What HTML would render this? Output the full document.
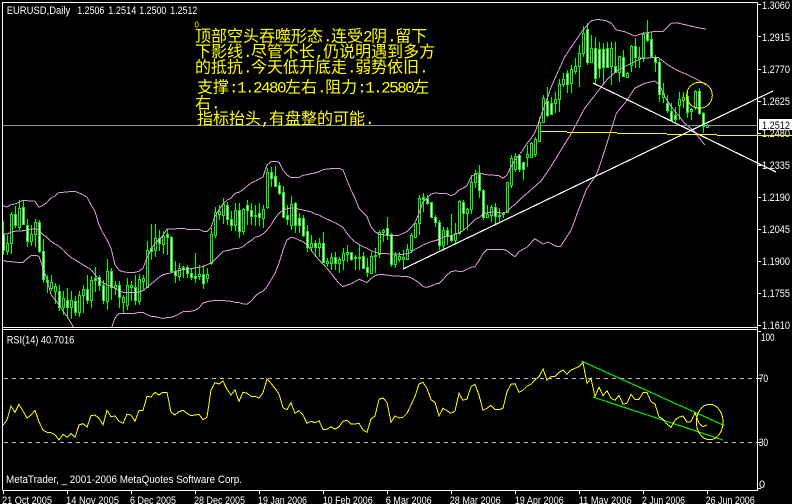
<!DOCTYPE html>
<html><head><meta charset="utf-8"><title>EURUSD,Daily</title>
<style>
html,body{margin:0;padding:0;background:#000;width:792px;height:504px;overflow:hidden}
svg{display:block}
.l{font:11px "Liberation Sans",sans-serif;fill:#fff}
.c{font:16px "WenQuanYi Zen Hei","Noto Sans CJK SC",sans-serif;fill:#ff0}
.m{font:16px "Liberation Mono",monospace;letter-spacing:-1.6px}
</style></head><body>
<svg id="s" xmlns="http://www.w3.org/2000/svg" width="792" height="504" viewBox="0 0 792 504">
<defs><clipPath id="mc"><rect x="3" y="3" width="754" height="324"/></clipPath></defs>
<g id="candles" shape-rendering="crispEdges"></g>
<g id="bands" clip-path="url(#mc)" fill="none" stroke="#dda0dd" shape-rendering="crispEdges"></g>
<path d="M3 125.5H757" stroke="#8a95a0" shape-rendering="crispEdges"/>
<path d="M2.5 490V2.5H757.5V490.5H2.5M2 327.5H757M2 329.5H757" fill="none" stroke="#fff" shape-rendering="crispEdges"/>
<path stroke="#fff" shape-rendering="crispEdges" d="M758 4.5h3M758 36.5h3M758 69.5h3M758 101.5h3M758 133.5h3M758 165.5h3M758 197.5h3M758 229.5h3M758 261.5h3M758 293.5h3M758 325.5h3M758 331.5h3M758 378.5h3M758 442.5h3M758 488.5h3M3.5 491v3M67.5 491v3M131.5 491v3M195.5 491v3M259.5 491v3M323.5 491v3M387.5 491v3M451.5 491v3M515.5 491v3M579.5 491v3M643.5 491v3M707.5 491v3"/>
<g class="l">
<text x="6.7" y="14" class="l" textLength="63.5" lengthAdjust="spacingAndGlyphs">EURUSD,Daily</text>
<text x="77.3" y="14" class="l" textLength="27" lengthAdjust="spacingAndGlyphs">1.2506</text>
<text x="108.3" y="14" class="l" textLength="28" lengthAdjust="spacingAndGlyphs">1.2514</text>
<text x="139.3" y="14" class="l" textLength="27" lengthAdjust="spacingAndGlyphs">1.2500</text>
<text x="170.3" y="14" class="l" textLength="27" lengthAdjust="spacingAndGlyphs">1.2512</text>
<text x="762" y="9" class="l" textLength="28" lengthAdjust="spacingAndGlyphs">1.3060</text>
<text x="762" y="41" class="l" textLength="28" lengthAdjust="spacingAndGlyphs">1.2915</text>
<text x="762" y="73" class="l" textLength="28" lengthAdjust="spacingAndGlyphs">1.2770</text>
<text x="762" y="105" class="l" textLength="28" lengthAdjust="spacingAndGlyphs">1.2625</text>
<text x="762" y="137" class="l" textLength="28" lengthAdjust="spacingAndGlyphs">1.2480</text>
<text x="762" y="169" class="l" textLength="28" lengthAdjust="spacingAndGlyphs">1.2335</text>
<text x="762" y="201" class="l" textLength="28" lengthAdjust="spacingAndGlyphs">1.2190</text>
<text x="762" y="233" class="l" textLength="28" lengthAdjust="spacingAndGlyphs">1.2045</text>
<text x="762" y="265" class="l" textLength="28" lengthAdjust="spacingAndGlyphs">1.1900</text>
<text x="762" y="297" class="l" textLength="28" lengthAdjust="spacingAndGlyphs">1.1755</text>
<text x="762" y="329" class="l" textLength="28" lengthAdjust="spacingAndGlyphs">1.1610</text>
<text x="761" y="341" class="l" textLength="13.5" lengthAdjust="spacingAndGlyphs">100</text>
<text x="758.7" y="382" class="l" textLength="9.5" lengthAdjust="spacingAndGlyphs">70</text>
<text x="758.7" y="446" class="l" textLength="9.5" lengthAdjust="spacingAndGlyphs">30</text>
<text x="759" y="488" class="l">0</text>
<text x="6.7" y="343.7" class="l" textLength="67.5" lengthAdjust="spacingAndGlyphs">RSI(14) 40.7016</text>
<text x="6" y="483" class="l" textLength="236" lengthAdjust="spacingAndGlyphs">MetaTrader, _ 2001-2006 MetaQuotes Software Corp.</text>
<text x="2" y="504" class="l" textLength="50" lengthAdjust="spacingAndGlyphs">21 Oct 2005</text>
<text x="66" y="504" class="l" textLength="53" lengthAdjust="spacingAndGlyphs">14 Nov 2005</text>
<text x="130" y="504" class="l" textLength="46" lengthAdjust="spacingAndGlyphs">6 Dec 2005</text>
<text x="194" y="504" class="l" textLength="51" lengthAdjust="spacingAndGlyphs">28 Dec 2005</text>
<text x="258" y="504" class="l" textLength="49" lengthAdjust="spacingAndGlyphs">19 Jan 2006</text>
<text x="322.7" y="504" class="l" textLength="50" lengthAdjust="spacingAndGlyphs">10 Feb 2006</text>
<text x="385.7" y="504" class="l" textLength="46" lengthAdjust="spacingAndGlyphs">6 Mar 2006</text>
<text x="449.7" y="504" class="l" textLength="51" lengthAdjust="spacingAndGlyphs">28 Mar 2006</text>
<text x="514.7" y="504" class="l" textLength="49" lengthAdjust="spacingAndGlyphs">19 Apr 2006</text>
<text x="578.7" y="504" class="l" textLength="53" lengthAdjust="spacingAndGlyphs">11 May 2006</text>
<text x="642" y="504" class="l" textLength="43" lengthAdjust="spacingAndGlyphs">2 Jun 2006</text>
<text x="705.7" y="504" class="l" textLength="49" lengthAdjust="spacingAndGlyphs">26 Jun 2006</text>
</g>
<rect x="759" y="119" width="33" height="11" fill="#fff"/>
<text x="762" y="129" class="l" style="fill:#000" textLength="28" lengthAdjust="spacingAndGlyphs">1.2512</text>
<g shape-rendering="crispEdges" fill="none">
<path d="M541 131.5H567M567 132.5H617M617 133.5H667M667 134.5H717M717 135.5H792" stroke="#ff0"/>
<path d="M403 269L773 91M593 83L776 172" stroke="#fff" stroke-width="1.2"/>
<ellipse cx="699.5" cy="95.3" rx="12.8" ry="13" stroke="#ff0"/>
<path d="M581.3 361L724.7 425.7M593 397L723 440" stroke="#00e800" stroke-width="1.2"/>
<path d="M4 378.5H757M4 442.5H757" stroke="#c0c0c0" stroke-dasharray="4 4"/>
<polyline id="rsi" stroke="#ff0"/>
<ellipse cx="709.7" cy="422" rx="13.3" ry="17.7" stroke="#ff0"/>
</g>
<text x="194.5" y="27.5" style="font:8px 'Liberation Sans',sans-serif;fill:#ff0">0</text>
<text class="c" x="195" y="41.5">顶部空头吞噬形态<tspan class="m">.</tspan>连受<tspan class="m">2</tspan>阴<tspan class="m">.</tspan>留下</text>
<text class="c" x="195" y="57">下影线<tspan class="m">.</tspan>尽管不长<tspan class="m">,</tspan>仍说明遇到多方</text>
<text class="c" x="195" y="72.5">的抵抗<tspan class="m">.</tspan>今天低开底走<tspan class="m">.</tspan>弱势依旧<tspan class="m">.</tspan></text>
<text class="c" x="197" y="92.5">支撑<tspan class="m">:1.2480</tspan>左右<tspan class="m">.</tspan>阻力<tspan class="m">:1.2580</tspan>左</text>
<text class="c" x="195" y="108.5">右<tspan class="m">.</tspan></text>
<text class="c" x="197" y="124">指标抬头<tspan class="m">,</tspan>有盘整的可能<tspan class="m">.</tspan></text>
</svg>
<script>
var NS="http://www.w3.org/2000/svg";
function el(p,t,a){var e=document.createElementNS(NS,t);for(var k in a)e.setAttribute(k,a[k]);p.appendChild(e);return e}
var c2=[[160,198,245,262,1],[200,225,248,262,0],[132,138,225,258,0],[115,138,172,180,1],[97,120,178,185,0],[97,118,168,172,1],[152,172,218,236,1],[172,197,218,235,0],[152,163,198,236,0],[155,163,250,255,1],[213,250,332,345,1],[320,337,343,375,1],[320,343,360,368,0],[345,355,370,408,0],[352,370,418,430,1],[370,390,418,440,0],[360,397,418,450,1],[370,397,418,452,0],[385,400,432,445,1],[370,380,432,448,0],[350,364,380,436,0],[320,364,396,408,1],[325,337,396,420,0],[297,330,336,372,1],[320,328,352,370,1],[335,352,396,408,1],[273,310,400,425,0],[300,310,358,395,1],[340,351,360,380,0],[340,352,387,420,1],[380,388,402,436,0],[330,352,410,425,0],[340,352,358,400,0],[320,358,396,410,1],[318,334,398,410,0],[322,331,338,365,0],[220,245,358,360,0],[168,240,248,275,1],[168,210,245,268,0],[185,210,225,250,1],[188,205,228,258,0],[182,197,207,260,1],[205,207,308,312,1],[280,308,322,345,1],[285,301,324,340,0],[295,297,303,330,1],[290,298,316,330,1],[300,316,328,335,1],[255,325,330,345,1],[290,318,323,335,0],[290,318,345,362,1],[300,319,330,345,0],[180,198,285,290,0],[118,132,200,210,0],[110,130,138,155,0],[90,108,140,168,0],[102,110,152,170,1],[130,153,170,188,1],[105,127,170,190,0],[105,127,188,210,1],[120,123,190,200,0],[95,112,127,170,1],[105,127,143,170,1],[110,140,143,175,1],[105,135,148,175,1],[112,122,150,180,0]];
var c3=[[115,125,232,238,0],[110,125,143,170,1],[108,138,167,170,1],[155,166,190,195,1],[168,187,260,265,1],[225,255,268,285,1],[198,222,285,300,0],[215,220,285,310,1],[250,265,285,310,1],[255,265,315,320,1],[285,302,350,365,1],[315,340,352,365,0],[330,340,352,380,1],[325,340,352,380,0],[307,340,395,400,1],[385,392,400,412,0],[370,382,400,420,0],[365,382,400,420,1],[380,388,398,428,0],[355,370,390,420,0],[345,365,372,395,0],[365,367,386,392,1],[375,382,385,420,1],[345,382,385,420,1],[365,378,415,418,1],[385,412,425,442,1],[365,378,428,430,0],[355,375,378,430,1],[300,305,372,385,0],[298,300,306,335,0],[262,295,315,330,1],[310,313,402,412,1],[365,375,402,415,0],[365,378,387,395,0],[360,382,388,418,0],[342,358,386,390,0],[310,316,360,370,0],[280,280,320,325,0],[195,205,280,315,0],[190,200,207,245,1],[195,205,218,225,1],[215,217,262,265,1],[255,262,275,290,1],[270,275,345,360,1],[290,300,345,358,0],[290,300,318,345,1],[252,315,330,335,1],[280,310,330,340,0],[210,213,310,315,0],[210,217,250,300,1],[235,238,248,300,0],[135,155,238,252,0],[120,130,155,175,0],[105,132,180,205,1],[178,180,262,270,1],[225,252,262,265,0],[225,232,255,275,0],[220,232,258,285,1],[235,256,258,275,0],[245,250,253,265,1],[155,157,245,250,0],[75,85,165,175,0],[70,77,117,125,0],[72,75,118,125,1],[95,97,117,150,1],[45,72,80,110,0]];
var c4=[[425,430,470,475,0],[410,418,462,470,0],[350,365,422,425,0],[285,293,365,368,0],[260,303,345,350,1],[290,310,342,345,1],[275,297,310,340,0],[238,252,297,335,0],[220,236,252,262,0],[210,220,252,280,1],[195,208,248,280,0],[175,197,212,222,0],[135,160,197,262,0],[78,100,160,170,0],[70,87,187,195,1],[105,145,185,190,0],[110,145,235,250,1],[125,147,205,235,1],[130,147,200,255,1],[125,145,200,205,1],[125,145,197,255,0],[125,197,215,218,1],[168,167,215,245,0],[150,170,227,230,1],[215,220,230,235,0],[135,138,195,217,0],[115,137,172,205,1],[140,170,177,205,0],[95,103,175,185,0],[60,100,120,125,1],[95,118,168,172,1],[165,170,185,215,1],[178,185,283,305,1],[250,280,290,310,0],[285,310,330,338,1],[310,333,360,362,1],[320,345,358,365,1],[275,298,315,360,0],[275,290,300,325,0],[270,287,335,355,1],[325,327,332,360,0],[270,273,322,330,0],[265,273,340,345,1],[335,338,378,400,1],[373,376,380,383,0]];
var g="",w="",b="",i=0;
function add(arr,yo){arr.forEach(function(d){var x=3+4*i,h=Math.round(yo+d[0]/3),t=Math.round(yo+d[1]/3),e=Math.round(yo+d[2]/3),l=Math.round(yo+d[3]/3),X=x+.5;
g+="M"+X+" "+h+"V"+l+"M"+(x-.5)+" "+(t+.5)+"h2V"+(e+.5)+"h-2z";
var s="M"+X+" "+(t+1)+"V"+e;if(d[4])w+=s;else b+=s;i++})}
add(c2,168);add(c3,130);add(c4,0);
var cg=document.getElementById("candles");
el(cg,"path",{d:g,stroke:"#0f0",fill:"none"});el(cg,"path",{d:b,stroke:"#000"});el(cg,"path",{d:w,stroke:"#fff"});

function idx(a,st,yo){return a.map(function(v,k){return (3+4*(st+k))+","+(yo+v/3).toFixed(1)})}
function pr(a,yo){var o=[];for(var k=0;k<a.length;k+=2)o.push((528+a[k]/3).toFixed(1)+","+(yo+a[k+1]/3).toFixed(1));return o}
var up2=[113,117,110,108,103,97,98,99,100,118,112,103,90,84,73,73,72,70,70,75,80,87,110,130,170,195,215,240,290,307,311,313,313,313,310,300,270,245,225,215,203,183,183,183,181,181,184,184,184,184,190,190,178,145,125,108,97,90,76,73,65,55,45,40,33,27];
var up3=[105,95,94,97,120,135,143,143,142,136,134,131,129,125,119,117,116,115,115,120,150,180,205,235,248,260,290,305,313,314,316,316,317,316,310,305,293,278,250,215,205,192,189,190,190,191,197,192,180,175,167,140,133,128,132,134,135,136,137,145,135,110,90,75,60,40];
var up4=[10,415,22,395,40,345,70,260,110,170,165,90,190,62,210,58,235,62,250,70,265,90,290,95,320,108,345,100,375,95,405,95,430,70,445,68,475,75,510,83,535,88];
var mid2=[198,198,193,190,189,188,186,183,182,186,200,208,220,228,235,245,258,268,275,283,290,298,305,320,335,345,350,355,360,368,373,374,374,374,372,368,358,348,338,328,320,317,315,310,308,305,303,302,300,298,296,290,285,275,262,250,248,245,241,241,236,226,218,208,205,198];
var mid3=[300,285,265,250,240,236,234,234,238,240,243,245,252,255,262,268,272,278,285,292,310,325,335,343,350,355,362,367,370,371,371,372,372,373,373,372,367,358,352,345,340,335,332,328,322,318,318,313,308,302,292,280,268,263,252,248,246,246,248,250,245,232,224,212,200,190];
var mid4=[130,400,170,325,205,280,240,235,270,210,300,195,340,175,390,172,420,195,450,212,480,225,510,240,535,255];
var lo2=[278,280,281,282,284,284,272,263,262,265,300,335,380,395,410,430,445,465,485];
var lo2b=[485,450,436,436,436,437,436,433,433,440,445,446,449,451,449,448,444,438,431,430,430,427,420,405,401,399,397,397,397,399,400,403,403,408,409,400,385,375,370];
var lo3=[470,450,430,400,360,330,322,324,330,335,345,360,375,390,402,415,430,445,460,470,465,462,455,448,452,458,445,437,433,434,435,437,438,438,440,440,443,450,458,470,472,468,463,460,448,435,425,422,424,424,418,412,410,392,370,358,358,358,358,358,362,372,380,365,358,352];
var lo8=[20,212,45,228,60,222,85,235,98,235,130,185,150,130,175,65,205,20];
var lo4=[213,504,240,420,265,340,290,310,320,265,350,250,380,243,395,255,410,290,430,320,470,370,500,395,530,435];
var bg=document.getElementById("bands");
function pl(a){el(bg,"polyline",{points:a.join(" ")})}
pl(idx(up2,0,168).concat(idx(up3,66,130),pr(up4,0)));
pl(idx(mid2,0,168).concat(idx(mid3,66,130),["541,181","550,168"],pr(mid4,0)));
pl(idx(lo2,0,168));
pl(idx(lo2b,27,168).concat(idx(lo3,66,130),pr(lo8,168),pr(lo4,0)));

var r=[300,285,243,262,238,258,279,270,256,290,316,322,323,329,345,328,337,326,337,300,296,306,272,270,280,300,256,275,273,289,295,268,270,289,257,256,214,216,202,210,202,202,262,270,260,256,265,272,270,268,284,277,195,173,177,168,193,210,195,229,202,205,214,214,219,203,
162,175,190,207,248,254,233,265,257,270,295,289,293,287,313,313,305,313,305,289,286,297,297,295,315,322,282,273,223,219,232,292,273,279,277,265,240,214,177,172,190,224,232,273,250,257,265,258,205,226,222,185,178,210,256,250,241,253,254,250,200,178,176,202,196,184,
178,165,155,132,165,155,155,142,135,148,135,130,125,113,175,160,215,186,212,197,220,226,211,238,235,208,223,223,203,203,230,237,275,283,297,307,285,277,273,291,290,263,295,305,300];
document.getElementById("rsi").setAttribute("points",idx(r,0,325).join(" "));
</script>
</body></html>
